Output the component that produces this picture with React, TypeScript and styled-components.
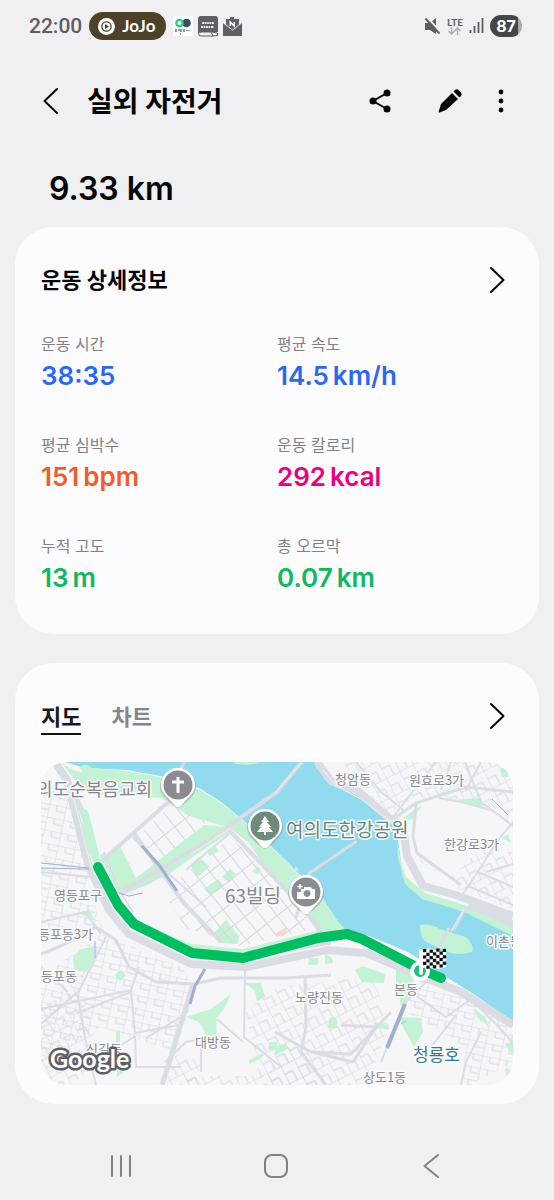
import React from "react";
import styled, { createGlobalStyle } from "styled-components";

const GlobalStyle = createGlobalStyle`
  *, *::before, *::after { box-sizing: border-box; }
  body {
    margin: 0;
    background: #f0f0f2;
    color: #060607;
    font-family: Inter, "Noto Sans CJK KR", sans-serif;
  }
`;

const Screen = styled.div`
  display: flex;
  flex-direction: column;
  min-height: 100vh;
`;

const StatusBar = styled.div`
  display: flex;
  align-items: center;
  justify-content: space-between;
  height: 52px;
  padding: 0 32px 0 29px;
  color: #5d5e62;
`;

const StatusGroup = styled.div<{ $gap: number }>`
  display: flex;
  align-items: center;
  gap: ${(p) => p.$gap}px;
`;

const Clock = styled.time`
  font: 500 21px/28px Roboto, sans-serif;
`;

const NowPill = styled.button`
  display: flex;
  align-items: center;
  gap: 7px;
  height: 28px;
  padding: 0 11px 0 9px;
  border: 0;
  border-radius: 14px;
  background: #4b4229;
  color: #fff;
  font: 700 17px/28px Lato, sans-serif;
`;

const Network = styled.div`
  display: flex;
  flex-direction: column;
  align-items: center;
  font: 700 10px/10px Lato, sans-serif;
`;

const Battery = styled.div`
  width: 32px;
  height: 22px;
  border-radius: 11px;
  background: linear-gradient(90deg, #444548 87%, #a9aaad 87%);
  color: #fff;
  font: 700 16px/22px Inter, sans-serif;
  text-align: center;
`;

const Header = styled.header`
  display: flex;
  align-items: center;
  height: 98px;
  padding: 0 33px 0 31px;
`;

const IconButton = styled.button`
  display: flex;
  align-items: center;
  justify-content: center;
  width: 40px;
  height: 40px;
  padding: 0;
  border: 0;
  background: none;
  color: inherit;
`;

const Title = styled.h1`
  flex: 1;
  margin: 2px 0 0 16px;
  font-size: 28px;
  line-height: 40px;
  font-weight: 700;
`;

const Actions = styled.div`
  display: flex;
  gap: 30px;
  margin-right: 11px;
`;

const Distance = styled.p`
  margin: 0;
  padding: 19px 49px 18px;
  font-size: 32px;
  line-height: 40px;
  font-weight: 600;
`;

const Cards = styled.main`
  display: flex;
  flex-direction: column;
  gap: 29px;
  padding: 0 15px;
`;

const Card = styled.section<{ $bottom: number }>`
  padding: 34px 26px ${(p) => p.$bottom}px;
  border-radius: 38px;
  background: #fcfcfe;
`;

const CardHead = styled.div`
  display: flex;
  align-items: center;
  justify-content: space-between;
  height: 38px;
`;

const ArrowButton = styled(IconButton)`
  width: 32px;
`;

const CardTitle = styled.h2`
  margin: 0;
  font-size: 22px;
  line-height: 36px;
  font-weight: 700;
`;

const Stats = styled.dl`
  display: grid;
  grid-template-columns: 1fr 1fr;
  row-gap: 40px;
  margin: 34px 0 0;
`;

const StatLabel = styled.dt`
  color: #818286;
  font-size: 16px;
  line-height: 22px;
`;

const StatValue = styled.dd<{ $color: string }>`
  display: flex;
  gap: 4px;
  margin: 3px 0 0;
  color: ${(p) => p.$color};
  font-size: 26px;
  line-height: 36px;
  font-weight: 600;
`;

const Tabs = styled.div`
  display: flex;
  gap: 30px;
`;

const Tab = styled.button<{ $active?: boolean }>`
  height: 38px;
  padding: 0;
  border: 0;
  border-bottom: 2px solid ${(p) => (p.$active ? "#111" : "transparent")};
  background: none;
  color: ${(p) => (p.$active ? "#18181a" : "#85868a")};
  font: 700 22px/36px "Noto Sans CJK KR", sans-serif;
`;

const MapFrame = styled.div`
  margin-top: 27px;
  border-radius: 26px;
  overflow: hidden;
  background: #f6f6f8;
`;

const MapSvg = styled.svg`
  display: block;
  width: 100%;
  height: auto;
`;

const MapLabel = styled.text<{ $size?: number }>`
  font: 400 ${(p) => p.$size ?? 13}px "Noto Sans CJK KR", sans-serif;
  stroke: #fafafb;
  stroke-width: 3px;
  stroke-linejoin: round;
  paint-order: stroke;
`;

const Wordmark = styled.text`
  font: 700 25px Lato, sans-serif;
  fill: #fff;
  stroke: #606165;
  stroke-width: 5px;
  stroke-linejoin: round;
  paint-order: stroke;
`;

const NavBar = styled.nav`
  display: grid;
  grid-template-columns: repeat(3, 1fr);
  justify-items: center;
  align-items: center;
  height: 68px;
  margin-top: auto;
  padding: 0 45px 0 43px;
  color: #828286;
`;

const Chevron = ({ back = false }: { back?: boolean }) => (
  <svg width="16" height="28" viewBox="0 0 16 28" fill="none" stroke="currentColor" strokeWidth="2" strokeLinecap="round" strokeLinejoin="round">
    <path d={back ? "M14 2 1.500 14 14 26" : "M2 2 14.500 14 2 26"} />
  </svg>
);

const STATS = [
  { label: "운동 시간", value: "38:35", unit: "", color: "#2b68ee" },
  { label: "평균 속도", value: "14.5", unit: "km/h", color: "#2b68ee" },
  { label: "평균 심박수", value: "151", unit: "bpm", color: "#ec5f28" },
  { label: "운동 칼로리", value: "292", unit: "kcal", color: "#ec0080" },
  { label: "누적 고도", value: "13", unit: "m", color: "#0db961" },
  { label: "총 오르막", value: "0.07", unit: "km", color: "#0db961" },
];

const Pin = ({ x, y, color, children }: { x: number; y: number; color: string; children: React.ReactNode }) => (
  <g transform={`translate(${x} ${y})`}>
    <path d="M-18 1.500a18 18 0 1 1 36 0c0 7-5 11-9 15l-6 5q-3 2.500-6 0l-6-5c-4-4-9-8-9-15Z" fill="#8b8f94" opacity=".5" />
    <path d="M-17 0a17 17 0 1 1 34 0c0 7-5 11-9 15l-5 6q-3 2.500-6 0l-5-6c-4-4-9-8-9-15Z" fill="#fff" />
    <circle r="14.500" fill={color} />
    {children}
  </g>
);

const FlagChecks = () => (
  <g>
    <path d="M382 188q6-3 12 0t11 0v17q-5 3-11 1t-12 0Z" fill="#fff" />
    {Array.from({ length: 42 }, (_, i) => {
      const col = i % 7;
      const row = Math.floor(i / 7);
      return (col + row) % 2 === 0 ? (
        <rect key={i} x={382 + col * 3.3} y={187 + row * 3.2 + Math.sin(col) * 0.7} width="3.300" height="3.200" fill="#111" />
      ) : null;
    })}
  </g>
);

const RideMap = () => (
  <MapSvg viewBox="0 0 472 323" role="img" aria-label="지도">
    <defs>
      <pattern id="blocksA" width="17" height="13" patternUnits="userSpaceOnUse" patternTransform="rotate(12)">
        <path d="M0 0H17M0 0V13M8 0V6M8 6H17" stroke="#d5d8e0" fill="none" />
      </pattern>
      <pattern id="blocksB" width="15" height="19" patternUnits="userSpaceOnUse" patternTransform="rotate(-27)">
        <path d="M0 0H15M0 0V19M0 9H9V19" stroke="#d5d8e0" fill="none" />
      </pattern>
      <pattern id="blocksC" width="13" height="19" patternUnits="userSpaceOnUse" patternTransform="rotate(-38)">
        <path d="M0 0H13M0 0V19" stroke="#d5d8e0" strokeWidth="2" fill="none" />
      </pattern>
    </defs>
    <rect width="472" height="323" fill="#f6f6f8" />

    {/* neighbourhood street grids */}
    <path d="M0 20 28 32 48 120 62 170 0 180Z" fill="url(#blocksA)" />
    <path d="M60 172 140 205 155 225 135 290 60 265 0 300V215Z" fill="url(#blocksA)" />
    <path d="M0 245 40 225 60 300 30 323H0Z" fill="url(#blocksB)" />
    <path d="M236 225 330 215 350 260 325 323H220L205 250Z" fill="url(#blocksB)" />
    <path d="M375 215 410 225 472 268V300L430 323H420L425 285 365 250Z" fill="url(#blocksA)" />
    <path d="M300 0H472V60L440 38 375 36 345 52 318 20Z" fill="url(#blocksB)" />
    <path d="M372 70 380 100 420 128 472 148V90L430 85 415 115Z" fill="url(#blocksB)" />
    <path d="M135 290 160 300 155 323H125Z" fill="url(#blocksB)" />
    <path d="M145 314H225L250 280 290 323H145Z" fill="url(#blocksB)" />

    {/* stadium-shaped clearing beside the north bank */}
    <path d="M376 44 440 46 450 62 434 92 402 120 378 92 372 70Z" fill="#f6f6f8" />

    {/* water */}
    <path d="M24 0H274L284 18 314 31 334 48 354 58 358 85 362 115 381 133 414 141 447 158 472 168V260L434 233 407 216 367 190 331 175 304 168 297 160 281 135 254 108 234 88 202 58 180 40 160 27 125 15 86 8 44 6Z" fill="#92daed" />

    {/* riverside parks */}
    <path d="M20 0Q32 10 42 10L38 5Q46 0 51 6L86 9 125 16 160 28 180 41 202 59 234 89 254 109 281 136 297 160 306 170 280 176 262 146 226 107 207 80 189 66 148 54 120 36 48 32 34 18Z" fill="#c4f2d5" />
    <path d="M192 0H220Q208 5 192 1Z" fill="#c4f2d5" />
    <path d="M356 78 360 100 365 115 384 131 414 140 472 161V169L447 159 414 147 381 137 364 122 357 95Z" fill="#c4f2d5" />
    <path d="M379 163Q390 161 399 167L425 175Q434 184 431 190 415 195 402 188L387 181Q379 178 379 163Z" fill="#c4f2d5" />
    <path d="M429 153 445 153 472 166V174Z" fill="#c4f2d5" />
    <path d="M244 97 252 105 246 106ZM255 104l3 5-5-1Z" fill="#c4f2d5" />

    {/* inland parks */}
    <path d="M59 94 77 80 95 116 163 63 185 65 188 71 150 96 128 112 87 131 78 132Z" fill="#c4f2d5" />
    <path d="M149 103 158 95 168 104 166 107 156 115ZM165 90l9-6 4 5-9 5ZM163 127l14-10 6 7-14 9ZM181 115l8-8 6 5-7 9ZM211 109l6-5 3 5-4 4Z" fill="#c4f2d5" />
    <path d="M92 158 150 182 202 187 270 170 300 163 308 172 277 177 202 195 151 190Z" fill="#c4f2d5" />
    <path d="M172 172 185 158 198 174 197 182 180 181Z" fill="#c4f2d5" />
    <path d="M32 195Q40 184 53 185V204Q45 213 33 207Z" fill="#c4f2d5" />
    <path d="M40 152l8-5 6 12ZM74 213l6-5 5 5-6 6Z" fill="#c4f2d5" />
    <path d="M145 255 170 247 190 232 183 247 175 257 176 274 168 277 158 260ZM204 221h16l4 14-8 4-2-10ZM75 270l4-2v22l4 20-7 5ZM228 280h8v8h-9ZM208 298l16-8-3 6-13 6Z" fill="#c4f2d5" />
    <path d="M268 196h9v7h-10ZM284 192l7 4 1 5-8 1ZM314 208l8-4 22 8-1 9-22-1Z" fill="#c4f2d5" />
    <path d="M355 203 374 208 370 235 360 245 355 220ZM358 255 380 256 382 270 373 285 362 265ZM288 257q5-5 8 2v7h-9ZM333 260l15 4-1 4-14-4ZM234 284l10-2 4 4-14 8ZM432 246l12 9 4 10-12-10ZM464 282l8-3v14ZM464 306l8 3-6 9Z" fill="#c4f2d5" />
    <path d="M413 38 437 36 444 44 437 45ZM459 7q4-4 8 4v4h-6ZM462 75l5-3 3 9-7-4ZM363 55l18-12-8 13-8 4Z" fill="#c4f2d5" />
    <path d="M235 171l11-6-1 7-10 3Z" fill="#f9d5d5" />

    {/* Yeouido blocks */}
    <path d="M98 73 132 42 165 60 140 83 114 100Z" fill="url(#blocksC)" />
    <path d="M122 130 190 75 262 147 280 165 200 184 145 166Z" fill="url(#blocksC)" />
    <path d="M48 40 65 96 124 43 100 32Z" fill="#f6f6f8" />

    {/* main roads */}
    <g fill="none" stroke="#dadde4" strokeLinejoin="round">
      <path d="M14 0 26 18 34 50 47 102 68 148 88 172 150 202 205 205 285 188 325 191 380 214 420 230 472 263" strokeWidth="8" />
      <path d="M25 18 40 46 58 105 85 158 150 190 202 195 290 180" strokeWidth="5" />
      <path d="M276 0 290 19 318 30 348 56 362 64 366 94 382 124 415 133 472 154" strokeWidth="8" />
      <path d="M427 145 440 148 472 162" strokeWidth="7" />
      <path d="M54 105 124 43 135 36M80 130 165 80 236 30 261 0" strokeWidth="4" />
      <path d="M92 70 142 140 180 180M185 65 215 96 265 150 280 170" strokeWidth="4" />
      <path d="M63 90 78 128 92 150M125 112 92 75M128 112 165 145M145 108 188 72" strokeWidth="2" />
      <path d="M267 112 316 79M412 169 425 145M394 192 408 166M131 20 144 0M255 156 267 112" strokeWidth="3" />
      <path d="M0 110 50 115 80 132 110 120 131 105" strokeWidth="2" />
      <path d="M0 192 22 183 55 165 75 178 88 205 115 220 153 222 180 216 245 216 290 213" strokeWidth="3" />
      <path d="M152 222 142 255 130 295 121 323" strokeWidth="5" />
      <path d="M36 229 44 275 55 323M0 262 38 229 65 175M0 247 90 228 98 205M90 228 94 271 138 263" strokeWidth="2" />
      <path d="M27 230 0 205M36 251 90 230M105 276 140 255M55 300 94 274M176 257 202 280M204 208 203 275 240 305" strokeWidth="2" />
      <path d="M94 274 95 305 140 305M124 300 145 280 160 277M160 277V310M0 160 44 150 60 172" strokeWidth="2" />
      <path d="M264 215 265 265 260 290 285 323M234 270 270 290 310 292 350 250M300 263 335 265 312 300 270 290" strokeWidth="3" />
      <path d="M340 300 365 240 390 215M370 230 405 255 430 237 455 262 472 281M415 253 390 285M440 270 425 300 420 323" strokeWidth="2" />
      <path d="M355 55 375 41 425 25 472 30M375 42 372 75 376 91 420 123" strokeWidth="3" />
      <path d="M424 0 440 40 468 61 472 64M420 135 430 120 458 77 472 60M352 55 395 0M315 0 340 30 365 50M410 0 400 28M440 0 425 28" strokeWidth="2" />
      <path d="M398 36 420 40 450 48 468 60M472 102 445 110M427 124 472 143M437 110 472 125" strokeWidth="2" />
    </g>
    <g fill="none" stroke="#f0f1f4">
      <path d="M32 34 50 104 74 150 90 168 151 196 203 201 285 184" />
      <path d="M282 8 295 24 320 37 352 61M410 169 423 147M234 31 260 1M150 92 190 66" />
    </g>
    <path d="M40 50Q44 43 48 52L60 100 55 106 44 80Z" fill="#c4f2d5" />

    {/* elevated roads */}
    <g fill="none" stroke="#9fb0d0" strokeWidth="3">
      <path d="M101 84 118 103 136 129" />
      <path d="M164 207 154 224 149 242" />
      <path d="M364 242 346 286" strokeWidth="4" />
      <path d="M360 262 365 259M54 179V196M451 37 467 53M0 101 20 103 48 106M0 106 48 107M78 131 88 134 102 131" strokeWidth="1" />
    </g>

    {/* place names */}
    <g fill="#85878c">
      <MapLabel x="111" y="34" $size={18} textAnchor="end">의도순복음교회</MapLabel>
      <MapLabel x="184" y="141" $size={19}>63빌딩</MapLabel>
      <MapLabel x="13" y="138">영등포구</MapLabel>
      <MapLabel x="52" y="177" textAnchor="end">등포동3가</MapLabel>
      <MapLabel x="36" y="219" textAnchor="end">등포동</MapLabel>
      <MapLabel x="294" y="22">청암동</MapLabel>
      <MapLabel x="368" y="23">원효로3가</MapLabel>
      <MapLabel x="403" y="87">한강로3가</MapLabel>
      <MapLabel x="445" y="184">이촌동</MapLabel>
      <MapLabel x="254" y="240">노량진동</MapLabel>
      <MapLabel x="353" y="232">본동</MapLabel>
      <MapLabel x="154" y="285">대방동</MapLabel>
      <MapLabel x="45" y="292">신길동</MapLabel>
      <MapLabel x="322" y="320">상도1동</MapLabel>
    </g>
    <MapLabel x="245" y="75" $size={19} fill="#64877a">여의도한강공원</MapLabel>
    <MapLabel x="372" y="299" $size={17} fill="#34798f">청룡호</MapLabel>

    {/* recorded route */}
    <path d="M57 105 77 143 93 162 151 191 202 196 277 176 306 172 321 177 377 206 400 216" fill="none" stroke="#00bd62" strokeWidth="10" strokeLinecap="round" strokeLinejoin="round" />
    <circle cx="379" cy="209" r="8" fill="#1dc274" stroke="#fff" strokeWidth="4" />
    <path d="M380 211V189" stroke="#fff" strokeWidth="4" strokeLinecap="round" />
    <FlagChecks />

    <Pin x={137} y={23} color="#8b8c91">
      <path d="M0-8V8M-6-3H6" stroke="#fff" strokeWidth="3" />
    </Pin>
    <Pin x={224} y={64} color="#6e8a7b">
      <path d="M0-10 4-4H2L6 1H4L8 6H1V9H-1V6H-8L-4 1H-6L-2-4H-4Z" fill="#fff" />
    </Pin>
    <Pin x={265} y={130} color="#8b8c91">
      <path fillRule="evenodd" d="M-2-5H5L6-3H9V7H-9V0H-5V-3H-2ZM1-2a3.500 3.500 0 1 0 .1 0Z" fill="#fff" />
      <path d="M-6-8v5M-8.500-5.500h5" stroke="#fff" strokeWidth="1.500" />
    </Pin>
    <Wordmark x="9" y="306">Google</Wordmark>
  </MapSvg>
);

export default function App() {
  return (
    <Screen>
      <GlobalStyle />
      <StatusBar>
        <StatusGroup $gap={7}>
          <Clock>22:00</Clock>
          <NowPill>
            <svg width="17" height="17" viewBox="0 0 17 17" aria-hidden="true">
              <circle cx="8.500" cy="8.500" r="8.500" fill="#fff" />
              <circle cx="8.500" cy="8.500" r="4.600" fill="none" stroke="#4b4229" strokeWidth="1.300" />
              <path d="M7 6v5l4-2.500Z" fill="#4b4229" />
            </svg>
            JoJo
          </NowPill>
          <StatusGroup $gap={5}>
            <svg width="20" height="20" viewBox="0 0 20 20" aria-hidden="true">
              <rect width="20" height="20" fill="#fff" />
              <circle cx="13.500" cy="7" r="4.300" fill="#3d4d5c" />
              <circle cx="6.500" cy="7" r="3.200" fill="none" stroke="#20ce83" strokeWidth="2.200" />
              <path d="M3 13v3M5 14h2M8 13v3M11 13v3" stroke="#3d4d5c" strokeWidth="1.200" />
              <path d="M7.500 17v2M13 14.500h4" stroke="#76bda0" />
            </svg>
            <svg width="20" height="21" viewBox="0 0 20 21" aria-hidden="true">
              <path d="M3 0H17a3 3 0 0 1 3 3V16H3a2.500 2.500 0 0 0-3 2V3a3 3 0 0 1 3-3Z" fill="#5f6064" />
              <path d="M.7 18q.5-2 3-2H13l2 4H3q-2.300 0-2.300-2ZM13 16l6.500 1v2.500l-5 .5" fill="#f0f0f2" stroke="#5f6064" />
              <path d="M4 7h12M3 11h13" stroke="#e2e2e4" strokeWidth="1.800" strokeDasharray="2 .5" />
            </svg>
            <svg width="19" height="19" viewBox="0 0 19 19" aria-hidden="true">
              <path d="M7 2V0h4v2h5v6l3-2v13H0V6l3 2V2Z" fill="#5f6064" />
              <path d="M.5 6 9.500 13l9-7" fill="none" stroke="#f0f0f2" />
              <path d="M7.200 9V5l4 4V5" fill="none" stroke="#fff" strokeWidth="1.500" />
            </svg>
          </StatusGroup>
        </StatusGroup>
        <StatusGroup $gap={6}>
          <svg width="17" height="17" viewBox="0 0 17 17" aria-hidden="true">
            <path d="M1 5h5l6-5v16l-6-4H1Z" fill="currentColor" />
            <path d="M3-.5 18 15" stroke="#f0f0f2" strokeWidth="2" />
            <path d="m1.500.5 14 15" stroke="currentColor" strokeWidth="2" />
          </svg>
          <Network>
            LTE
            <svg width="13" height="8" viewBox="0 0 13 8" fill="none" stroke="#adaeb1" strokeWidth="1.400" aria-hidden="true">
              <path d="M3.500 0v7M.5 4l3 3 3-3M9.500 8V1M6.500 4l3-3 3 3" />
            </svg>
          </Network>
          <svg width="15" height="16" viewBox="0 0 15 16" stroke="currentColor" strokeWidth="1.800" aria-hidden="true">
            <path d="M1.500 12v3M5.500 8v7M9.500 4v11M13.500 0v15" />
          </svg>
          <Battery>87</Battery>
        </StatusGroup>
      </StatusBar>

      <Header>
        <IconButton aria-label="뒤로"><Chevron back /></IconButton>
        <Title>실외 자전거</Title>
        <Actions>
          <IconButton aria-label="공유">
            <svg width="22" height="24" viewBox="0 0 22 24" fill="currentColor">
              <path d="M18 4 4 12l14 8" fill="none" stroke="currentColor" strokeWidth="2" />
              <circle cx="18" cy="4" r="3.500" /><circle cx="4" cy="12" r="3.500" /><circle cx="18" cy="20" r="3.500" />
            </svg>
          </IconButton>
          <IconButton aria-label="편집">
            <svg width="24" height="24" viewBox="0 0 24 24" fill="currentColor">
              <path d="M14 4 20 10 8 21 1.500 23.500Q.5 24 .7 22.500L3 15ZM15.500 2.500 17 1q2-1.500 4 .5l1.500 1.500q2 2 .5 4L21.500 8.500Z" />
            </svg>
          </IconButton>
        </Actions>
        <IconButton aria-label="더보기">
          <svg width="6" height="24" viewBox="0 0 6 24" fill="currentColor">
            <circle cx="3" cy="3" r="2.400" /><circle cx="3" cy="12" r="2.400" /><circle cx="3" cy="21" r="2.400" />
          </svg>
        </IconButton>
      </Header>

      <Distance>9.33 km</Distance>

      <Cards>
        <Card $bottom={38}>
          <CardHead>
            <CardTitle>운동 상세정보</CardTitle>
            <ArrowButton aria-label="운동 상세정보 보기"><Chevron /></ArrowButton>
          </CardHead>
          <Stats>
            {STATS.map((s) => (
              <div key={s.label}>
                <StatLabel>{s.label}</StatLabel>
                <StatValue $color={s.color}>
                  <span>{s.value}</span>
                  {s.unit && <span>{s.unit}</span>}
                </StatValue>
              </div>
            ))}
          </Stats>
        </Card>

        <Card $bottom={19}>
          <CardHead>
            <Tabs role="tablist">
              <Tab role="tab" aria-selected="true" $active>지도</Tab>
              <Tab role="tab" aria-selected="false">차트</Tab>
            </Tabs>
            <ArrowButton aria-label="지도 보기"><Chevron /></ArrowButton>
          </CardHead>
          <MapFrame><RideMap /></MapFrame>
        </Card>
      </Cards>

      <NavBar>
        <IconButton aria-label="최근 앱">
          <svg width="22" height="22" viewBox="0 0 22 22" stroke="currentColor" strokeWidth="2" strokeLinecap="round"><path d="M2 1v20M11 1v20M20 1v20" /></svg>
        </IconButton>
        <IconButton aria-label="홈">
          <svg width="24" height="24" viewBox="0 0 24 24" fill="none" stroke="currentColor" strokeWidth="2"><rect x="1" y="1" width="22" height="22" rx="7" /></svg>
        </IconButton>
        <IconButton aria-label="뒤로 가기">
          <svg width="16" height="24" viewBox="0 0 16 24" fill="none" stroke="currentColor" strokeWidth="2" strokeLinecap="round" strokeLinejoin="round"><path d="M15 1 1.500 12 15 23" /></svg>
        </IconButton>
      </NavBar>
    </Screen>
  );
}
